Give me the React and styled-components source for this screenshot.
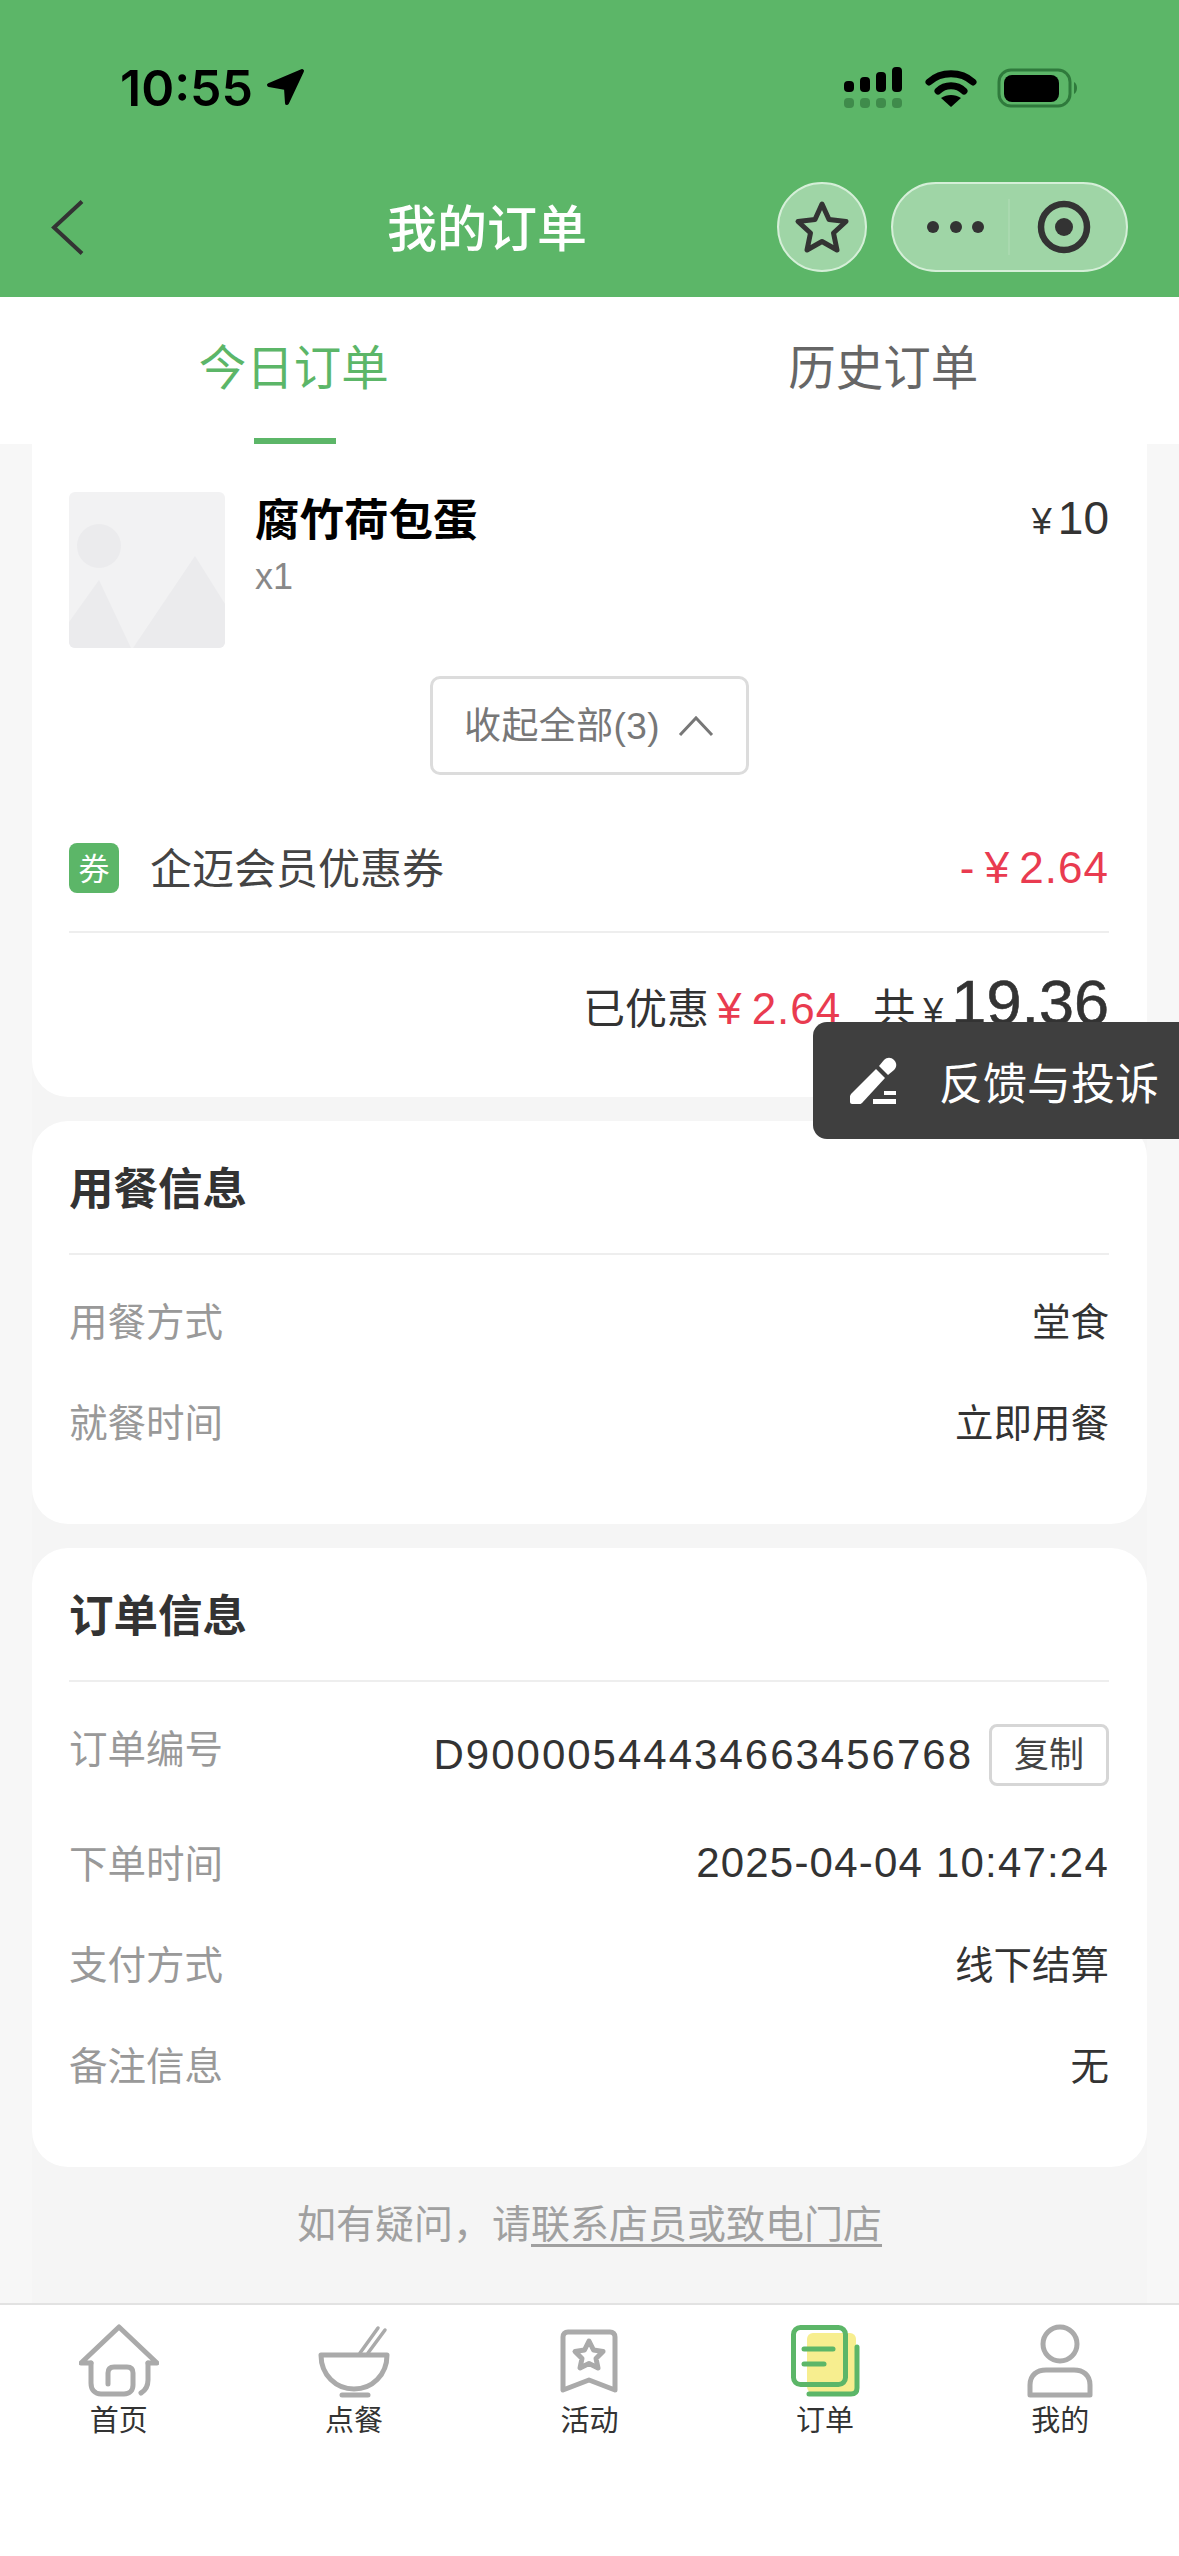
import styled, { createGlobalStyle } from "styled-components";

const GlobalStyle = createGlobalStyle`
  html, body {
    margin: 0;
    padding: 0;
    background: #fff;
  }
  * {
    box-sizing: border-box;
  }
`;

const FONT = `"Liberation Sans", "Noto Sans CJK SC", sans-serif`;
const GREEN = "#5cb668";
const RED = "#e93b50";

const Page = styled.div`
  position: relative;
  width: 1179px;
  height: 2556px;
  display: flex;
  flex-direction: column;
  overflow: hidden;
  font-family: ${FONT};
  background: #f7f7f7;
`;

const Header = styled.header`
  height: 297px;
  flex-shrink: 0;
  background: ${GREEN};
  display: flex;
  flex-direction: column;
`;

const StatusBar = styled.div`
  height: 182px;
  padding: 64px 98px 0 120px;
  display: flex;
  align-items: flex-start;
  justify-content: space-between;
`;

const Clock = styled.div`
  display: flex;
  align-items: center;
  height: 48px;
  font-family: Inter, sans-serif;
  font-size: 50px;
  font-weight: 600;
  color: #000;
`;

const ClockTime = styled.span`
  width: 146px;
`;

const StatusIcons = styled.div`
  display: flex;
  align-items: flex-start;
`;

const NavBar = styled.div`
  height: 90px;
  padding: 0 51px;
  display: flex;
  align-items: center;
`;

const BackSlot = styled.div`
  width: 33px;
  height: 55px;
  display: flex;
`;

const PageTitle = styled.div`
  width: 200px;
  margin-left: 303px;
  padding-top: 6px;
  font-size: 50px;
  line-height: 60px;
  font-weight: 500;
  color: #fff;
  white-space: nowrap;
`;

const RoundButton = styled.div`
  width: 90px;
  height: 90px;
  margin-left: 190px;
  border-radius: 50%;
  background: #9fd5a6;
  border: 2px solid #d5efd8;
  display: flex;
  align-items: center;
  justify-content: center;
`;

const Capsule = styled.div`
  width: 237px;
  height: 90px;
  margin-left: 24px;
  border-radius: 45px;
  background: #9fd5a6;
  border: 2px solid #d5efd8;
  display: flex;
  align-items: center;
`;

const CapsuleHalf = styled.div`
  height: 56px;
  width: ${(p) => p.$w}px;
  padding-left: ${(p) => (p.$line ? 10 : 0)}px;
  display: flex;
  align-items: center;
  justify-content: center;
  gap: 10.5px;
  border-right: ${(p) => (p.$line ? "2px solid #a9d9af" : "none")};
`;

const Dot = styled.span`
  width: 12px;
  height: 12px;
  border-radius: 50%;
  background: #333;
`;

const Tabs = styled.nav`
  height: 147px;
  flex-shrink: 0;
  background: #fff;
  display: flex;
`;

const Tab = styled.div`
  position: relative;
  flex: 1;
  display: flex;
  align-items: center;
  justify-content: center;
  padding: 0 2px 12px 0;
  font-size: 47.5px;
  color: ${(p) => (p.$active ? GREEN : "#666")};

  &::after {
    content: "";
    display: ${(p) => (p.$active ? "block" : "none")};
    position: absolute;
    left: 254px;
    bottom: 0;
    width: 82px;
    height: 6px;
    background: ${GREEN};
  }
`;

const Content = styled.main`
  flex: 1;
  min-height: 0;
  overflow: hidden;
  margin: 0 32px;
  background: #f5f5f5;
  display: flex;
  flex-direction: column;
  gap: 24px;
`;

const Card = styled.section`
  flex-shrink: 0;
  background: #fff;
  padding: 0 38px 0 37px;
  border-radius: ${(p) => (p.$cut ? "0 0 36px 36px" : "36px")};
`;

const ItemRow = styled.div`
  padding-top: 48px;
  display: flex;
  align-items: flex-start;
`;

const Thumb = styled.div`
  width: 156px;
  height: 156px;
  flex-shrink: 0;
  border-radius: 6px;
  overflow: hidden;
  background: #f2f2f3;
`;

const ItemInfo = styled.div`
  flex: 1;
  margin-left: 30px;
`;

const ItemName = styled.div`
  margin-top: 3px;
  font-size: 44.5px;
  line-height: 52px;
  font-weight: 700;
  color: #000;
`;

const ItemCount = styled.div`
  margin-top: 8px;
  font-size: 36px;
  line-height: 44px;
  color: #888;
`;

const Yen = styled.span`
  font-size: ${(p) => p.$size}px;
  margin-right: ${(p) => p.$gap || 4}px;
`;

const ItemPrice = styled.div`
  font-size: 46px;
  line-height: 52px;
  color: #333;
`;

const ExpandRow = styled.div`
  margin-top: 28px;
  display: flex;
  justify-content: center;
`;

const ExpandButton = styled.div`
  width: 319px;
  height: 99px;
  border: 3px solid #dcdcdc;
  border-radius: 10px;
  display: flex;
  align-items: center;
  justify-content: center;
  gap: 18px;
  font-size: 37px;
  letter-spacing: 0.4px;
  color: #777;
`;

const ExpandText = styled.span`
  margin-bottom: 6px;
`;

const CouponRow = styled.div`
  margin-top: 68px;
  height: 50px;
  display: flex;
  align-items: center;
`;

const CouponBadge = styled.span`
  width: 50px;
  height: 50px;
  border-radius: 8px;
  background: ${GREEN};
  color: #fff;
  font-size: 31px;
  padding-bottom: 4px;
  display: flex;
  align-items: center;
  justify-content: center;
`;

const CouponName = styled.span`
  flex: 1;
  margin-left: 31px;
  margin-bottom: 6px;
  font-size: 42px;
  color: #444;
`;

const RedText = styled.span`
  font-size: 44px;
  color: ${RED};
  letter-spacing: 1px;
  word-spacing: -4px;
`;

const Divider = styled.div`
  height: 2px;
  background: #eeeeee;
`;

const CouponDivider = styled(Divider)`
  margin-top: 38px;
`;

const TotalRow = styled.div`
  height: 164px;
  padding-top: 39px;
  display: flex;
  align-items: baseline;
  justify-content: flex-end;
  font-size: 42px;
  line-height: 60px;
  color: #333;
`;

const TotalLabel = styled.span`
  margin-left: ${(p) => p.$gap || 0}px;
  margin-right: 8px;
`;

const TotalValue = styled.span`
  font-size: 63px;
  color: #333;
  -webkit-text-stroke: 0.6px #333;
`;

const CardTitle = styled.h2`
  height: 132px;
  margin: 0;
  padding-bottom: 4px;
  display: flex;
  align-items: center;
  font-size: 44.5px;
  font-weight: 700;
  color: #333;
`;

const RowList = styled.div`
  padding: 18px 0 49px;
`;

const InfoRow = styled.div`
  height: ${(p) => (p.$tall ? 115 : 101)}px;
  display: flex;
  align-items: center;
  justify-content: space-between;
  font-size: 38.5px;
`;

const InfoLabel = styled.span`
  color: #999;
  margin-bottom: ${(p) => (p.$raised ? 24 : 10)}px;
`;

const InfoValue = styled.span`
  margin-bottom: 10px;
  color: #333;
`;

const NumberValue = styled.span`
  display: flex;
  align-items: center;
  margin-bottom: 6px;
  font-size: 42px;
  color: #333;
  letter-spacing: ${(p) => p.$spacing}px;
`;

const CopyButton = styled.span`
  width: 120px;
  height: 62px;
  margin-left: 16px;
  border: 3px solid #d6d6d6;
  border-radius: 8px;
  display: flex;
  align-items: center;
  justify-content: center;
  padding-bottom: 6px;
  font-size: 35px;
  letter-spacing: 0;
  color: #444;
`;

const HelpText = styled.p`
  margin: 9px 0 0;
  text-align: center;
  font-size: 39px;
  line-height: 50px;
  color: #a0a0a0;
`;

const HelpLink = styled.span`
  text-decoration: underline;
  text-underline-offset: 6px;
`;

const FeedbackButton = styled.div`
  position: absolute;
  top: 1022px;
  right: 0;
  width: 366px;
  height: 117px;
  border-radius: 14px 0 0 14px;
  background: #3f3f3f;
  padding-left: 37px;
  display: flex;
  align-items: center;
  font-size: 44px;
  color: #fff;
  white-space: nowrap;
`;

const FeedbackText = styled.span`
  margin-left: 41px;
`;

const BottomNav = styled.nav`
  height: 253px;
  flex-shrink: 0;
  background: #fff;
  border-top: 2px solid #e2e2e2;
  padding-top: 18px;
  display: flex;
  justify-content: center;
`;

const NavItem = styled.div`
  width: 235.4px;
  display: flex;
  flex-direction: column;
  align-items: center;
`;

const NavLabel = styled.span`
  margin-top: 4px;
  font-size: 29px;
  line-height: 36px;
  color: #333;
`;

const SignalIcon = () => (
  <svg width="60" height="44" viewBox="0 0 60 44" style={{ marginTop: 3, marginRight: 22 }}>
    <rect x="1" y="14" width="10" height="11" rx="4" fill="#000" />
    <rect x="17" y="10" width="10" height="15" rx="4" fill="#000" />
    <rect x="33" y="5" width="10" height="20" rx="4" fill="#000" />
    <rect x="49" y="0" width="10" height="25" rx="4" fill="#000" />
    {[1, 17, 33, 49].map((x) => (
      <rect key={x} x={x} y="31" width="10" height="10" rx="4" fill="#3f8b4b" />
    ))}
  </svg>
);

const WifiIcon = () => (
  <svg width="52" height="40" viewBox="0 0 52 40" style={{ marginTop: 5, marginRight: 20 }}>
    <path d="M4 13 C16 2 36 2 48 13" fill="none" stroke="#000" strokeWidth="7" strokeLinecap="round" />
    <path d="M13 22 C20 15 32 15 39 22" fill="none" stroke="#000" strokeWidth="7" strokeLinecap="round" />
    <path d="M26 38 L16 29 C22 25 30 25 36 29 Z" fill="#000" />
  </svg>
);

const BatteryIcon = () => (
  <svg width="84" height="40" viewBox="0 0 84 40" style={{ marginTop: 4 }}>
    <rect x="2" y="2" width="71" height="36" rx="12" fill="none" stroke="#2f7a3c" strokeWidth="3" />
    <rect x="7" y="7" width="55" height="27" rx="8" fill="#000" />
    <path d="M77 14 C81 16 81 24 77 26 Z" fill="#2f7a3c" />
  </svg>
);

const LocationArrow = () => (
  <svg width="40" height="40" viewBox="0 0 40 40">
    <path d="M36 3 L3 17 L20 20 L21 35 Z" fill="#000" stroke="#000" strokeWidth="4" strokeLinejoin="round" />
  </svg>
);

const BackIcon = () => (
  <svg width="33" height="55" viewBox="0 0 33 55">
    <path d="M31 1.5 L3 27.5 L31 53.5" fill="none" stroke="#333" strokeWidth="4" />
  </svg>
);

const StarOutline = () => (
  <svg width="56" height="54" viewBox="0 0 56 54">
    <path
      d="M28 4 L35 19.5 L52 21.5 L39.5 33 L43 50 L28 41.5 L13 50 L16.5 33 L4 21.5 L21 19.5 Z"
      fill="none"
      stroke="#333"
      strokeWidth="5"
      strokeLinejoin="round"
    />
  </svg>
);

const TargetIcon = () => (
  <svg width="54" height="54" viewBox="0 0 54 54">
    <circle cx="27" cy="27" r="23" fill="none" stroke="#333" strokeWidth="6.5" />
    <circle cx="27" cy="27" r="9" fill="#333" />
  </svg>
);

const ThumbArt = () => (
  <svg width="156" height="156" viewBox="0 0 156 156">
    <ellipse cx="30" cy="54" rx="22" ry="22" fill="#ebebed" />
    <path d="M0 156 L0 130 L30 88 L62 156 Z" fill="#ebebed" />
    <path d="M64 156 L126 64 L156 112 L156 156 Z" fill="#ebebed" />
  </svg>
);

const ChevronUp = () => (
  <svg width="36" height="22" viewBox="0 0 36 22">
    <path d="M2 20 L18 3 L34 20" fill="none" stroke="#777" strokeWidth="3" />
  </svg>
);

const PencilIcon = () => (
  <svg width="48" height="48" viewBox="0 0 48 48" fill="#fff">
    <path d="M1 37 L26 12 L35 21 L12 46 C11 47 10 47 9 47 L2 47 C1 47 0 46 0 45 L0 39 Z" />
    <path d="M29 9 L34 3 C37 0 41 0 44 3 C47 6 47 10 44 13 L38 18 Z" />
    <rect x="34" y="34" width="12" height="4" />
    <rect x="23" y="42" width="23" height="5" />
  </svg>
);

const HomeIcon = () => (
  <svg width="80" height="76" viewBox="0 0 80 76" fill="none" stroke="#aaa" strokeWidth="5" strokeLinecap="round" strokeLinejoin="round">
    <path d="M12 40 L2 40 L40 4 L78 40 L69 40" />
    <path d="M12 40 L12 60 C12 67 16 71 22 71 L45 71 C51 71 54 67 54 62 L54 50 C54 46 52 44 48 44 L35 44 C31 44 29 46 29 50 L29 61" />
    <path d="M69 40 L69 57 C69 63 67 67 62 70" />
  </svg>
);

const BowlIcon = () => (
  <svg width="80" height="76" viewBox="0 0 80 76" fill="none" stroke="#aaa" strokeLinecap="round">
    <path d="M7 32 L73 32 C73 52 58 66 40 66 C22 66 7 52 7 32 Z" strokeWidth="5" strokeLinejoin="round" />
    <path d="M46 30 L64 5" strokeWidth="3.5" />
    <path d="M54 30 L71 7" strokeWidth="3.5" />
    <path d="M28 72 L54 72" strokeWidth="5" />
  </svg>
);

const BookmarkIcon = () => (
  <svg width="80" height="76" viewBox="0 0 80 76" fill="none" stroke="#aaa" strokeWidth="5" strokeLinejoin="round">
    <path d="M14 14 C14 11 16 9 19 9 L61 9 C64 9 66 11 66 14 L66 67 L40 57 L14 67 Z" />
    <path d="M40 18 L44.5 27 L54 28.5 L47 35.5 L49 45 L40 40.5 L31 45 L33 35.5 L26 28.5 L35.5 27 Z" />
  </svg>
);

const OrderIcon = () => (
  <svg width="80" height="76" viewBox="0 0 80 76" fill="none">
    <rect x="22" y="10" width="49" height="60" rx="6" fill="#f7ee8f" />
    <path d="M72 24 L72 65 C72 69 70 71 66 71 L24 71" stroke={GREEN} strokeWidth="5" strokeLinecap="round" />
    <rect x="8.5" y="4.5" width="52" height="57" rx="7" stroke={GREEN} strokeWidth="5" />
    <path d="M19 26 L48 26" stroke={GREEN} strokeWidth="5" strokeLinecap="round" />
    <path d="M19 41 L39 41" stroke={GREEN} strokeWidth="5" strokeLinecap="round" />
  </svg>
);

const PersonIcon = () => (
  <svg width="80" height="76" viewBox="0 0 80 76" fill="none" stroke="#aaa" strokeWidth="5">
    <circle cx="40" cy="21" r="17" />
    <path d="M10 72 L70 72 L70 62 C70 52 63 47 54 47 L26 47 C17 47 10 52 10 62 Z" strokeLinejoin="round" />
  </svg>
);

const navItems = [
  { label: "首页", Icon: HomeIcon },
  { label: "点餐", Icon: BowlIcon },
  { label: "活动", Icon: BookmarkIcon },
  { label: "订单", Icon: OrderIcon },
  { label: "我的", Icon: PersonIcon },
];

const App = () => {
  return (
    <>
      <GlobalStyle />
      <Page>
        <Header>
          <StatusBar>
            <Clock>
              <ClockTime>10:55</ClockTime>
              <LocationArrow />
            </Clock>
            <StatusIcons>
              <SignalIcon />
              <WifiIcon />
              <BatteryIcon />
            </StatusIcons>
          </StatusBar>
          <NavBar>
            <BackSlot>
              <BackIcon />
            </BackSlot>
            <PageTitle>我的订单</PageTitle>
            <RoundButton>
              <StarOutline />
            </RoundButton>
            <Capsule>
              <CapsuleHalf $w={117} $line>
                <Dot />
                <Dot />
                <Dot />
              </CapsuleHalf>
              <CapsuleHalf $w={107}>
                <TargetIcon />
              </CapsuleHalf>
            </Capsule>
          </NavBar>
        </Header>

        <Tabs>
          <Tab $active>今日订单</Tab>
          <Tab>历史订单</Tab>
        </Tabs>

        <Content>
          <Card $cut>
            <ItemRow>
              <Thumb>
                <ThumbArt />
              </Thumb>
              <ItemInfo>
                <ItemName>腐竹荷包蛋</ItemName>
                <ItemCount>x1</ItemCount>
              </ItemInfo>
              <ItemPrice>
                <Yen $size={36} $gap={6}>¥</Yen>10
              </ItemPrice>
            </ItemRow>
            <ExpandRow>
              <ExpandButton>
                <ExpandText>收起全部(3)</ExpandText>
                <ChevronUp />
              </ExpandButton>
            </ExpandRow>
            <CouponRow>
              <CouponBadge>券</CouponBadge>
              <CouponName>企迈会员优惠券</CouponName>
              <RedText>- ¥ 2.64</RedText>
            </CouponRow>
            <CouponDivider />
            <TotalRow>
              <TotalLabel>已优惠</TotalLabel>
              <RedText>¥ 2.64</RedText>
              <TotalLabel $gap={32}>共</TotalLabel>
              <Yen $size={36} $gap={8}>¥</Yen>
              <TotalValue>19.36</TotalValue>
            </TotalRow>
          </Card>

          <Card>
            <CardTitle>用餐信息</CardTitle>
            <Divider />
            <RowList>
              <InfoRow>
                <InfoLabel>用餐方式</InfoLabel>
                <InfoValue>堂食</InfoValue>
              </InfoRow>
              <InfoRow>
                <InfoLabel>就餐时间</InfoLabel>
                <InfoValue>立即用餐</InfoValue>
              </InfoRow>
            </RowList>
          </Card>

          <Card>
            <CardTitle>订单信息</CardTitle>
            <Divider />
            <RowList>
              <InfoRow $tall>
                <InfoLabel $raised>订单编号</InfoLabel>
                <NumberValue $spacing={2}>
                  D90000544434663456768
                  <CopyButton>复制</CopyButton>
                </NumberValue>
              </InfoRow>
              <InfoRow>
                <InfoLabel>下单时间</InfoLabel>
                <NumberValue $spacing={1.2}>2025-04-04 10:47:24</NumberValue>
              </InfoRow>
              <InfoRow>
                <InfoLabel>支付方式</InfoLabel>
                <InfoValue>线下结算</InfoValue>
              </InfoRow>
              <InfoRow>
                <InfoLabel>备注信息</InfoLabel>
                <InfoValue>无</InfoValue>
              </InfoRow>
            </RowList>
          </Card>

          <HelpText>
            如有疑问，请<HelpLink>联系店员或致电门店</HelpLink>
          </HelpText>
        </Content>

        <BottomNav>
          {navItems.map(({ label, Icon }) => (
            <NavItem key={label}>
              <Icon />
              <NavLabel>{label}</NavLabel>
            </NavItem>
          ))}
        </BottomNav>

        <FeedbackButton>
          <PencilIcon />
          <FeedbackText>反馈与投诉</FeedbackText>
        </FeedbackButton>
      </Page>
    </>
  );
};

export default App;
